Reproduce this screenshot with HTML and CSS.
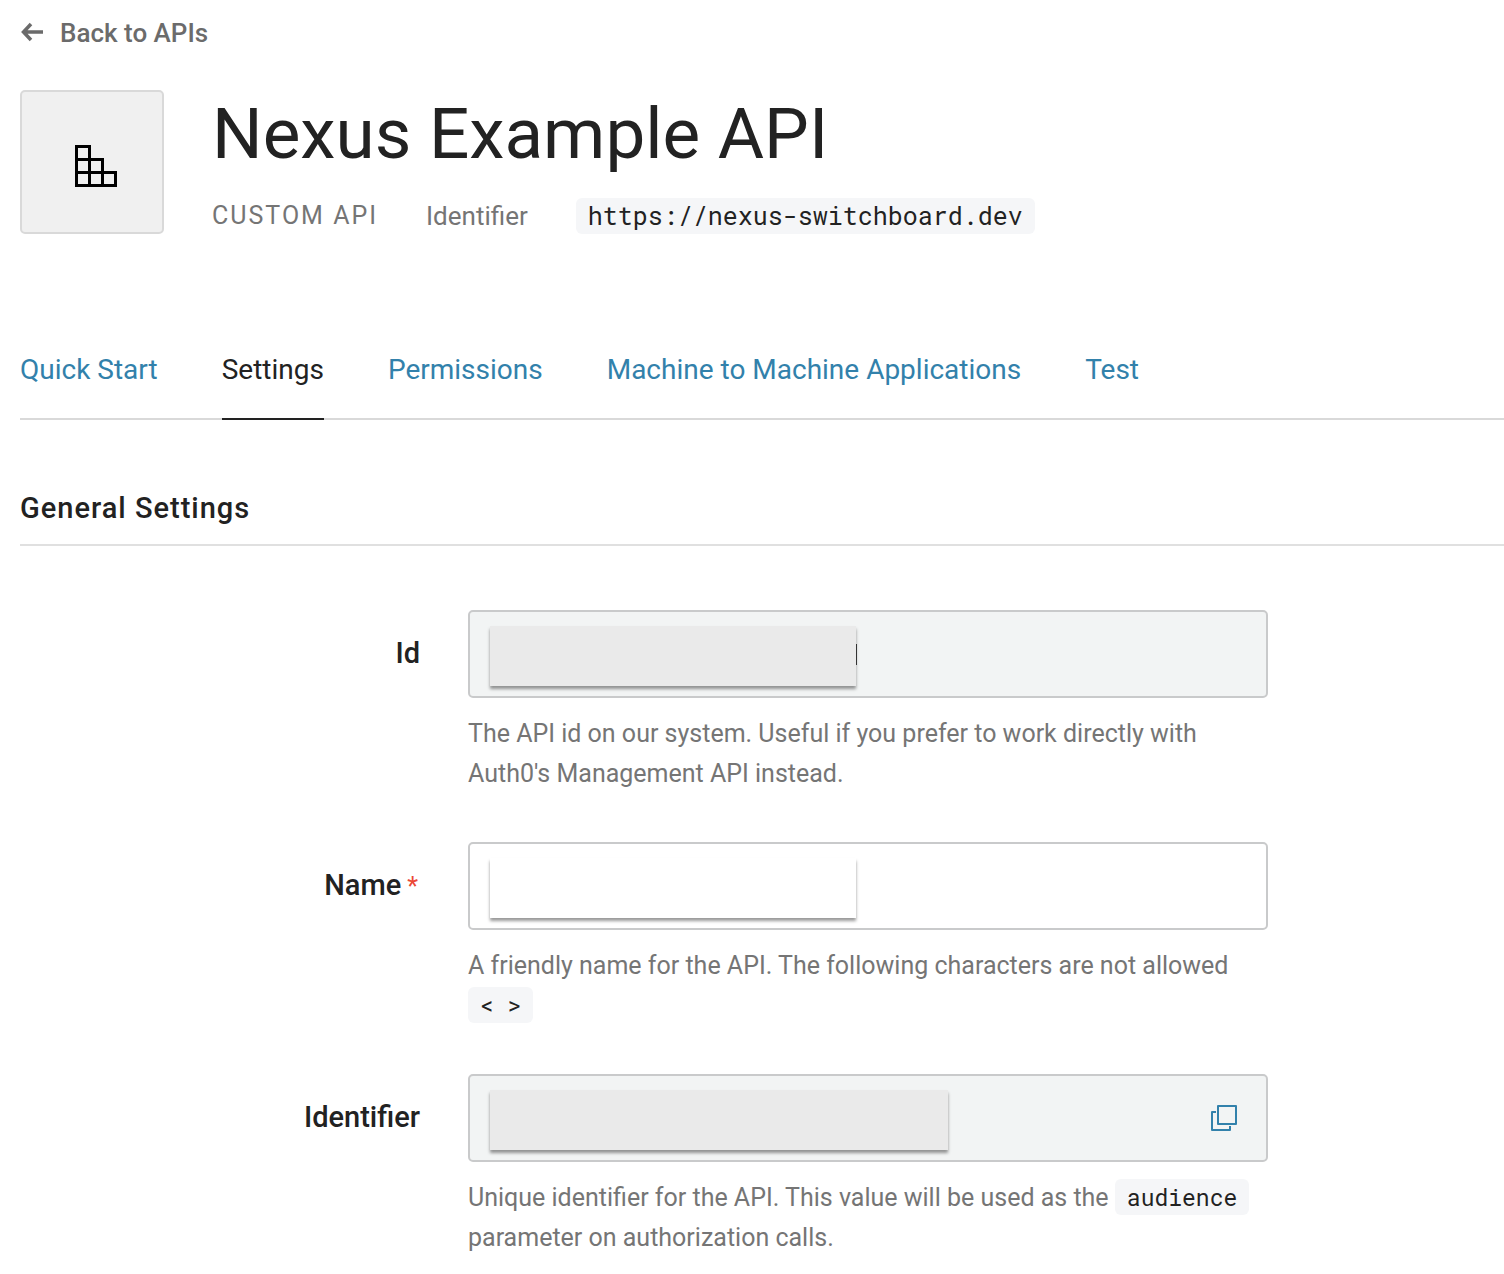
FILE: index.html
```html
<!DOCTYPE html>
<html lang="en">
<head>
<meta charset="utf-8">
<meta name="viewport" content="width=device-width, initial-scale=1">
<title>Nexus Example API</title>
<link rel="stylesheet" href="styles.css">
</head>
<body>
<main class="page">
  <a class="back" href="#apis">
    <svg class="back-icon" viewBox="0 0 24 24" width="24" height="24" aria-hidden="true"><path d="M23 11H4M11 3 3.500 11l7.500 8"/></svg>
    Back to APIs
  </a>

  <header class="api">
    <div class="api-tile">
      <svg class="api-icon" viewBox="0 0 44 44" width="44" height="44" aria-hidden="true"><path d="M2.500 2.500h13v39h-13zM2.500 15.500h26v26M2.500 28.500h39v13h-26M28.500 15.500v26"/></svg>
    </div>
    <div class="api-text">
      <h1 class="api-title">Nexus Example API</h1>
      <div class="api-meta">
        <span class="api-kind">CUSTOM API</span>
        <span>Identifier</span>
        <code class="code code-large">https://nexus-switchboard.dev</code>
      </div>
    </div>
  </header>

  <nav class="tabs">
    <a class="tab" href="#quick-start">Quick Start</a>
    <a class="tab tab-active" href="#settings" aria-current="page">Settings</a>
    <a class="tab" href="#permissions">Permissions</a>
    <a class="tab" href="#applications">Machine to Machine Applications</a>
    <a class="tab" href="#test">Test</a>
  </nav>

  <h2 class="section-title">General Settings</h2>

  <form class="form">
    <div class="row">
      <label class="label" for="api-id">Id</label>
      <div class="field">
        <div class="control">
          <input class="input input-readonly" id="api-id" type="text" readonly>
          <span class="mask mask-gray mask-caret"></span>
        </div>
        <p class="help">The API id on our system. Useful if you prefer to work directly with Auth0's Management API instead.</p>
      </div>
    </div>
    <div class="row">
      <label class="label" for="api-name">Name<span class="required">*</span></label>
      <div class="field">
        <div class="control">
          <input class="input" id="api-name" type="text" required>
          <span class="mask"></span>
        </div>
        <p class="help">A friendly name for the API. The following characters are not allowed <code class="code">&lt; &gt;</code></p>
      </div>
    </div>
    <div class="row">
      <label class="label" for="api-identifier">Identifier</label>
      <div class="field">
        <div class="control">
          <input class="input input-readonly" id="api-identifier" type="text" readonly>
          <span class="mask mask-gray mask-wide"></span>
          <button class="copy" type="button" aria-label="Copy identifier">
            <svg class="copy-icon" viewBox="0 0 28 28" width="28" height="28" aria-hidden="true"><path d="M8 2h18v18H8zM6 8H2v18h18v-4"/></svg>
          </button>
        </div>
        <p class="help">Unique identifier for the API. This value will be used as the <code class="code">audience</code> parameter on authorization calls.</p>
      </div>
    </div>
  </form>
</main>
</body>
</html>
```
FILE: styles.css
```css
* {
  box-sizing: border-box;
}

body {
  margin: 0;
  background: #fff;
  color: #222;
  font-family: Roboto, "Liberation Sans", sans-serif;
  font-size: 28px;
  line-height: 40px;
}

h1, h2, p {
  margin: 0;
}

a {
  color: #3281ab;
  text-decoration: none;
}

svg {
  display: block;
  fill: none;
}

.page {
  padding: 13px 0 16px 20px;
}

.back {
  display: flex;
  align-items: center;
  gap: 16px;
  width: fit-content;
  color: #6b6b6b;
  font-size: 26px;
  font-weight: 500;
}

.back-icon {
  stroke: #6b6b6b;
  stroke-width: 3.5;
}

.api {
  display: flex;
  gap: 48px;
  margin-top: 37px;
}

.api-tile {
  display: grid;
  place-items: center;
  flex: none;
  width: 144px;
  height: 144px;
  padding: 7px 0 0 7px;
  border: 2px solid #d9d9d9;
  border-radius: 5px;
  background: #f0f0f0;
}

.api-icon {
  stroke: #000;
  stroke-width: 3;
}

.api-title {
  font-size: 71px;
  font-weight: 400;
  line-height: 88px;
}

.api-meta {
  display: flex;
  align-items: center;
  gap: 48px;
  margin-top: 18px;
  color: #757575;
  font-size: 26px;
}

.api-kind {
  font-size: 25px;
  letter-spacing: 2px;
}

.code {
  display: inline-block;
  padding: 0 12px;
  border-radius: 6px;
  background: #f5f6f8;
  color: #222;
  font-family: "Roboto Mono", "Liberation Mono", monospace;
  font-size: 23px;
  line-height: 36px;
}

.code-large {
  font-size: 25px;
}

.tabs {
  display: flex;
  gap: 64px;
  margin-top: 114px;
  border-bottom: 2px solid #d9d9d9;
}

.tab {
  margin-bottom: -2px;
  padding-bottom: 28px;
  border-bottom: 2px solid transparent;
}

.tab-active {
  border-color: #222;
  color: #222;
}

.section-title {
  margin-top: 68px;
  padding-bottom: 16px;
  border-bottom: 2px solid #e0e0e0;
  font-size: 29px;
  font-weight: 500;
  letter-spacing: 1px;
}

.form {
  display: grid;
  gap: 48px;
  margin-top: 64px;
}

.row {
  display: grid;
  grid-template-columns: minmax(0, 400px) minmax(0, 800px);
  gap: 48px;
}

.label {
  padding-top: 23px;
  font-size: 29px;
  font-weight: 500;
  text-align: right;
}

.required {
  padding: 0 2px 0 6px;
  color: #eb4836;
  font-size: 25px;
  font-weight: 400;
}

.control {
  position: relative;
}

.input {
  display: block;
  width: 100%;
  height: 88px;
  padding: 0 20px;
  border: 2px solid #c9cacb;
  border-radius: 5px;
  background: #fff;
  color: #222;
  font: inherit;
}

.input-readonly {
  background: #f2f4f4;
}

.mask {
  position: absolute;
  top: 16px;
  left: 22px;
  width: 366px;
  height: 60px;
  background: #fff;
  box-shadow: 0 3px 3px rgba(0, 0, 0, 0.4);
}

.mask-gray {
  background: #eaeaea;
}

.mask-wide {
  width: 458px;
}

.mask-caret::after {
  content: "";
  position: absolute;
  top: 18px;
  left: 100%;
  width: 1px;
  height: 21px;
  background: #333;
}

.copy {
  position: absolute;
  top: 30px;
  right: 30px;
  padding: 0;
  border: 0;
  background: none;
}

.copy-icon {
  stroke: #3281ab;
  stroke-width: 2;
  stroke-linejoin: round;
}

.help {
  margin-top: 16px;
  color: #757575;
  font-size: 25px;
}
```
